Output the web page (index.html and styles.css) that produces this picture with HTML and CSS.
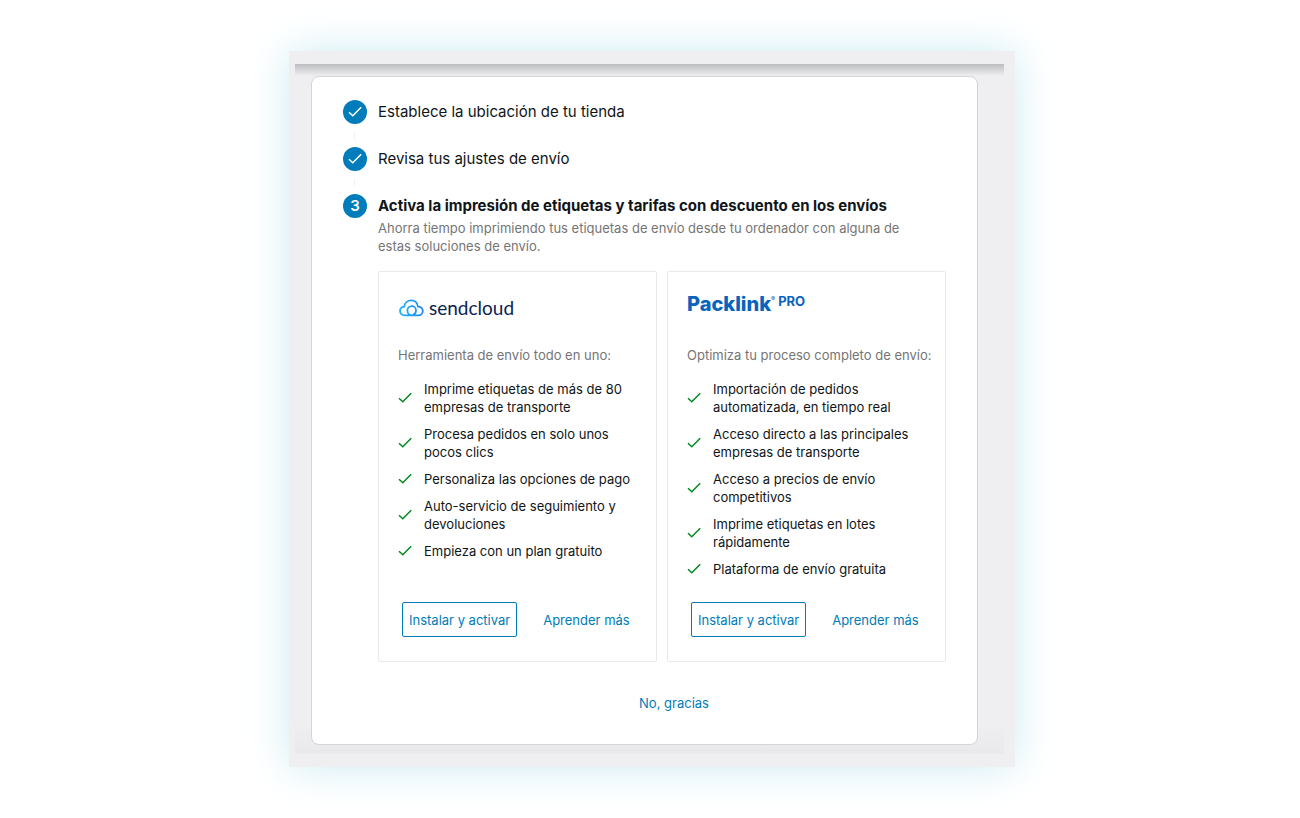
FILE: index.html
```
<!DOCTYPE html>
<html lang="es">
<head>
    <meta charset="UTF-8">
    <meta name="viewport" content="width=device-width, initial-scale=1.0">
    <title>Configuración de envíos</title>
    <link rel="stylesheet" href="styles.css">
</head>
<body>
    <svg class="sprite" aria-hidden="true">
        <symbol id="check" viewBox="0 0 14 12">
            <path d="M1 6.2 L4.8 9.8 L13.2 1.2" fill="none" stroke="currentColor" stroke-width="1.5"/>
        </symbol>
    </svg>

    <div class="frame">
        <div class="screen">
            <main class="card">
                <ol class="steps">
                    <li class="step">
                        <span class="step-icon"><svg class="check"><use href="#check"/></svg></span>
                        <h2 class="step-title">Establece la ubicación de tu tienda</h2>
                    </li>
                    <li class="step">
                        <span class="step-icon"><svg class="check"><use href="#check"/></svg></span>
                        <h2 class="step-title">Revisa tus ajustes de envío</h2>
                    </li>
                    <li class="step active">
                        <span class="step-icon">3</span>
                        <div class="step-body">
                            <h2 class="step-title">Activa la impresión de etiquetas y tarifas con descuento en los envíos</h2>
                            <p class="step-text">Ahorra tiempo imprimiendo tus etiquetas de envío desde tu ordenador con alguna de estas soluciones de envío.</p>

                            <div class="plugins">
                                <section class="plugin">
                                    <div class="logo sendcloud">
                                        <svg class="cloud" viewBox="0 0 26 20" fill="none" stroke-width="1.8" stroke-linecap="round">
                                            <defs>
                                                <linearGradient id="cloudFill" x1="0" y1="0" x2="1" y2="0">
                                                    <stop offset="0" stop-color="#1bb4fb"/>
                                                    <stop offset="1" stop-color="#1f87f5"/>
                                                </linearGradient>
                                            </defs>
                                            <path stroke="url(#cloudFill)" d="M11.6 17.4 H6.6 C4 17.4 2 15.5 2 13.1 C2 10.7 3.8 9 6.2 8.7 C6.7 5 9.5 2.4 13.1 2.4 C16.7 2.4 19.4 4.9 19.9 8.5 C22.7 8.6 24.8 10.5 24.8 13 C24.8 15.5 22.7 17.4 20.1 17.4 H14.6 C11.6 17.4 9.4 15.4 9.4 12.7 C9.4 10 11.3 8.2 13.7 8.2 C16.2 8.2 18 10 18 12.4 C18 14.5 17 15.7 15.6 16.4"/>
                                        </svg>
                                        <span>sendcloud</span>
                                    </div>
                                    <p class="intro">Herramienta de envío todo en uno:</p>
                                    <ul class="features">
                                        <li><svg class="check"><use href="#check"/></svg><span>Imprime etiquetas de más de 80 empresas de transporte</span></li>
                                        <li><svg class="check"><use href="#check"/></svg><span>Procesa pedidos en solo unos pocos clics</span></li>
                                        <li><svg class="check"><use href="#check"/></svg><span>Personaliza las opciones de pago</span></li>
                                        <li><svg class="check"><use href="#check"/></svg><span>Auto-servicio de seguimiento y devoluciones</span></li>
                                        <li><svg class="check"><use href="#check"/></svg><span>Empieza con un plan gratuito</span></li>
                                    </ul>
                                    <div class="actions">
                                        <button type="button" class="install-btn">Instalar y activar</button>
                                        <a href="#" class="link">Aprender más</a>
                                    </div>
                                </section>

                                <section class="plugin">
                                    <div class="logo packlink">
                                        <span>Packlink</span><sup class="reg">®</sup><span class="pro">PRO</span>
                                    </div>
                                    <p class="intro">Optimiza tu proceso completo de envío:</p>
                                    <ul class="features">
                                        <li><svg class="check"><use href="#check"/></svg><span>Importación de pedidos automatizada, en tiempo real</span></li>
                                        <li><svg class="check"><use href="#check"/></svg><span>Acceso directo a las principales empresas de transporte</span></li>
                                        <li><svg class="check"><use href="#check"/></svg><span>Acceso a precios de envío competitivos</span></li>
                                        <li><svg class="check"><use href="#check"/></svg><span>Imprime etiquetas en lotes rápidamente</span></li>
                                        <li><svg class="check"><use href="#check"/></svg><span>Plataforma de envío gratuita</span></li>
                                    </ul>
                                    <div class="actions">
                                        <button type="button" class="install-btn">Instalar y activar</button>
                                        <a href="#" class="link">Aprender más</a>
                                    </div>
                                </section>
                            </div>

                            <div class="skip">
                                <button type="button" class="link">No, gracias</button>
                            </div>
                        </div>
                    </li>
                </ol>
            </main>
        </div>
    </div>
</body>
</html>
```
FILE: styles.css
```
* {
    margin: 0;
    padding: 0;
    box-sizing: border-box;
}

body {
    font-family: Inter, 'Liberation Sans', sans-serif;
    font-size: 13px;
    line-height: 18px;
    color: #101517;
    background: #fff;
    min-height: 100vh;
    display: flex;
    align-items: center;
    justify-content: center;
    padding-left: 4px;
}

.sprite {
    position: absolute;
    width: 0;
    height: 0;
}

.frame {
    width: 100%;
    max-width: 726px;
    padding: 13px 11px 13px 6px;
    background: #efeff1;
    box-shadow: 0 0 40px #cdebf3;
}

.screen {
    padding: 12px 26px 9px 16px;
    background:
        linear-gradient(#bcbdc0, rgba(239, 239, 241, 0)) top / 100% 12px no-repeat,
        linear-gradient(rgba(232, 232, 234, 0), #e9e9eb) bottom / 100% 30px no-repeat,
        #efeff1;
}

.card {
    padding: 23px 31px 32px;
    background: #fff;
    border: 1px solid #d4d5d8;
    border-radius: 8px;
}

.steps {
    list-style: none;
}

.step {
    display: flex;
    gap: 11px;
    margin-bottom: 23px;
    position: relative;
}

.step.active {
    margin-bottom: 0;
}

/* connector between two steps */
.step:not(.active)::after {
    content: "";
    position: absolute;
    left: 11px;
    top: 32px;
    width: 1px;
    height: 7px;
    background: #f0f0f1;
}

.step-icon {
    flex: none;
    width: 24px;
    height: 24px;
    border-radius: 50%;
    display: flex;
    align-items: center;
    justify-content: center;
    background: #007cba;
    color: #fff;
    font-size: 15px;
    font-weight: 600;
}

.step-body {
    flex: 1;
    min-width: 0;
}

.step-title {
    font-size: 15px;
    font-weight: 400;
    line-height: 24px;
}

.active .step-title {
    font-weight: 700;
}

.step-text {
    color: #757575;
    margin: 1px 0 16px;
    padding-right: 31px;
}

.check {
    flex: none;
    width: 14px;
    height: 12px;
}

.plugins {
    display: grid;
    grid-template-columns: repeat(2, minmax(0, 1fr));
    gap: 10px;
}

.plugin {
    display: flex;
    flex-direction: column;
    padding: 18px 19px 24px;
    border: 1px solid #e9e9ea;
    border-radius: 2px;
}

.logo {
    display: flex;
    height: 56px;
}

.sendcloud {
    gap: 5px;
    font-family: Lato, sans-serif;
    font-size: 19px;
    line-height: 36px;
    color: #0a2350;
}

.cloud {
    width: 26px;
    height: 20px;
    margin-top: 8px;
}

.packlink {
    font-size: 20px;
    font-weight: 800;
    line-height: 28px;
    color: #0a63bd;
}

.reg {
    font-size: 6px;
    font-weight: 400;
    line-height: 18px;
}

.pro {
    font-size: 13px;
    font-weight: 700;
    line-height: 22px;
    margin-left: 3px;
}

.intro {
    color: #757575;
    margin-bottom: 16px;
    white-space: nowrap;
}

.features {
    list-style: none;
    display: grid;
    gap: 9px;
    padding-right: 4px;
    margin-bottom: 24px;
}

.features li {
    display: flex;
    align-items: center;
    gap: 12px;
}

.features .check {
    color: #008a20;
}

.actions {
    display: flex;
    align-items: center;
    gap: 26px;
    margin-top: auto;
    padding-left: 4px;
}

.install-btn,
.link {
    font: inherit;
    color: #007cba;
    background: none;
    border: none;
    text-decoration: none;
    white-space: nowrap;
    cursor: pointer;
}

.install-btn {
    height: 35px;
    padding: 0 6px;
    border: 1px solid #007cba;
    border-radius: 2px;
}

.skip {
    text-align: center;
    margin-top: 32px;
    padding-left: 24px;
}

.install-btn:hover,
.link:hover {
    color: #005a87;
}

@media (max-width: 640px) {
    .plugins {
        grid-template-columns: 1fr;
    }
}
```
